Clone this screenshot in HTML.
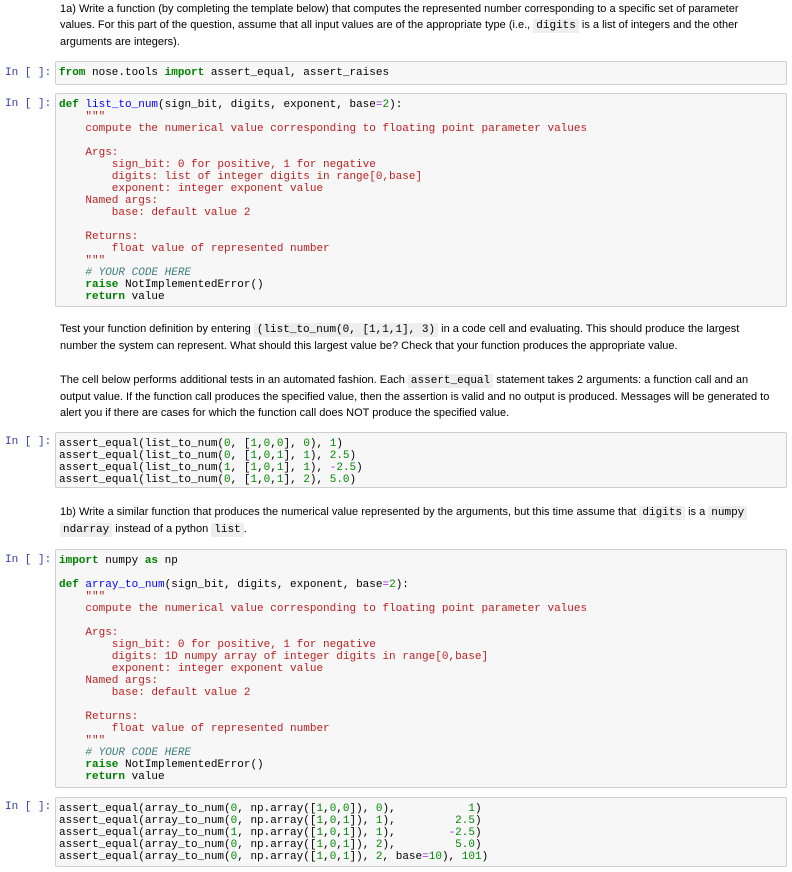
<!DOCTYPE html>
<html><head><meta charset="utf-8"><style>
body{margin:0;width:792px;height:872px;background:#fff;position:relative;overflow:hidden;font-family:"Liberation Sans",Arial,sans-serif;}
.md{position:absolute;left:60px;width:730px;font-size:11px;line-height:16px;color:#000;white-space:nowrap;}
.md code{font-family:"Liberation Mono",monospace;background:#eee;padding:1px 3px;font-size:11px;}
.p{position:absolute;left:5px;font-family:"Liberation Mono",monospace;font-size:11px;color:#303F9F;line-height:12px;}
.cell{position:absolute;left:55px;width:732px;background:#f7f7f7;border:1px solid #cfcfcf;border-radius:2px;box-sizing:border-box;}
.cell pre{margin:0;padding:5px 3px 4px;font-family:"Liberation Mono",monospace;font-size:11px;line-height:12px;color:#000;}
.k{color:#008000;font-weight:bold}.s{color:#BA2121}.n{color:#080}.o{color:#AA22FF}.c{color:#408080;font-style:italic}.f{color:#0000FF}
</style></head><body>
<div class="md" style="top:1px">1a) Write a function (by completing the template below) that computes the represented number corresponding to a specific set of parameter<br>values. For this part of the question, assume that all input values are of the appropriate type (i.e., <code>digits</code> is a list of integers and the other<br>arguments are integers).</div>

<div class="p" style="top:67px">In [ ]:</div>
<div class="cell" style="top:61px;height:24px"><pre><span class="k">from</span> nose.tools <span class="k">import</span> assert_equal, assert_raises</pre></div>

<div class="p" style="top:98px">In [ ]:</div>
<div class="cell" style="top:93px;height:214px"><pre><span class="k">def</span> <span class="f">list_to_num</span>(sign_bit, digits, exponent, base<span class="o">=</span><span class="n">2</span>):
    <span class="s">"""
    compute the numerical value corresponding to floating point parameter values

    Args:
        sign_bit: 0 for positive, 1 for negative
        digits: list of integer digits in range[0,base]
        exponent: integer exponent value
    Named args:
        base: default value 2

    Returns:
        float value of represented number
    """</span>
    <span class="c"># YOUR CODE HERE</span>
    <span class="k">raise</span> NotImplementedError()
    <span class="k">return</span> value</pre></div>

<div class="md" style="top:321px">Test your function definition by entering <code>(list_to_num(0, [1,1,1], 3)</code> in a code cell and evaluating. This should produce the largest<br>number the system can represent. What should this largest value be? Check that your function produces the appropriate value.</div>

<div class="md" style="top:372px">The cell below performs additional tests in an automated fashion. Each <code>assert_equal</code> statement takes 2 arguments: a function call and an<br>output value. If the function call produces the specified value, then the assertion is valid and no output is produced. Messages will be generated to<br>alert you if there are cases for which the function call does NOT produce the specified value.</div>

<div class="p" style="top:436px">In [ ]:</div>
<div class="cell" style="top:432px;height:56px"><pre>assert_equal(list_to_num(<span class="n">0</span>, [<span class="n">1</span>,<span class="n">0</span>,<span class="n">0</span>], <span class="n">0</span>), <span class="n">1</span>)
assert_equal(list_to_num(<span class="n">0</span>, [<span class="n">1</span>,<span class="n">0</span>,<span class="n">1</span>], <span class="n">1</span>), <span class="n">2.5</span>)
assert_equal(list_to_num(<span class="n">1</span>, [<span class="n">1</span>,<span class="n">0</span>,<span class="n">1</span>], <span class="n">1</span>), <span class="o">-</span><span class="n">2.5</span>)
assert_equal(list_to_num(<span class="n">0</span>, [<span class="n">1</span>,<span class="n">0</span>,<span class="n">1</span>], <span class="n">2</span>), <span class="n">5.0</span>)</pre></div>

<div class="md" style="top:504px">1b) Write a similar function that produces the numerical value represented by the arguments, but this time assume that <code>digits</code> is a <code>numpy</code><br><code>ndarray</code> instead of a python <code>list</code>.</div>

<div class="p" style="top:554px">In [ ]:</div>
<div class="cell" style="top:549px;height:239px"><pre><span class="k">import</span> numpy <span class="k">as</span> np

<span class="k">def</span> <span class="f">array_to_num</span>(sign_bit, digits, exponent, base<span class="o">=</span><span class="n">2</span>):
    <span class="s">"""
    compute the numerical value corresponding to floating point parameter values

    Args:
        sign_bit: 0 for positive, 1 for negative
        digits: 1D numpy array of integer digits in range[0,base]
        exponent: integer exponent value
    Named args:
        base: default value 2

    Returns:
        float value of represented number
    """</span>
    <span class="c"># YOUR CODE HERE</span>
    <span class="k">raise</span> NotImplementedError()
    <span class="k">return</span> value</pre></div>

<div class="p" style="top:801px">In [ ]:</div>
<div class="cell" style="top:797px;height:70px"><pre>assert_equal(array_to_num(<span class="n">0</span>, np.array([<span class="n">1</span>,<span class="n">0</span>,<span class="n">0</span>]), <span class="n">0</span>),           <span class="n">1</span>)
assert_equal(array_to_num(<span class="n">0</span>, np.array([<span class="n">1</span>,<span class="n">0</span>,<span class="n">1</span>]), <span class="n">1</span>),         <span class="n">2.5</span>)
assert_equal(array_to_num(<span class="n">1</span>, np.array([<span class="n">1</span>,<span class="n">0</span>,<span class="n">1</span>]), <span class="n">1</span>),        <span class="o">-</span><span class="n">2.5</span>)
assert_equal(array_to_num(<span class="n">0</span>, np.array([<span class="n">1</span>,<span class="n">0</span>,<span class="n">1</span>]), <span class="n">2</span>),         <span class="n">5.0</span>)
assert_equal(array_to_num(<span class="n">0</span>, np.array([<span class="n">1</span>,<span class="n">0</span>,<span class="n">1</span>]), <span class="n">2</span>, base<span class="o">=</span><span class="n">10</span>), <span class="n">101</span>)</pre></div>
</body></html>
